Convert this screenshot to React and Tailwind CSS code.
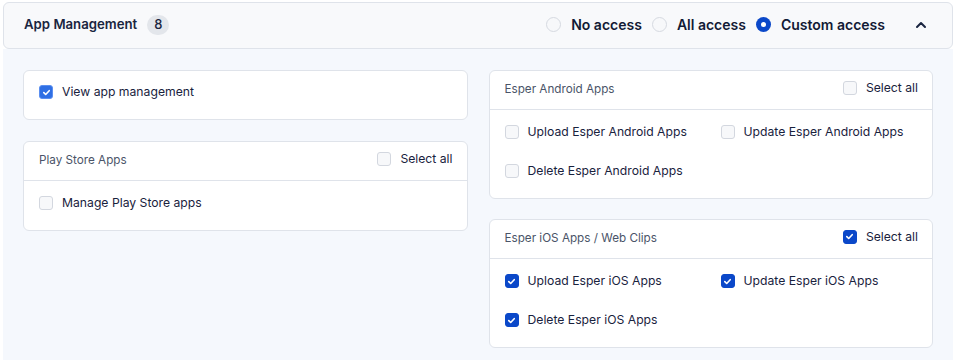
import React from "react";

const Check = ({ checked, variant = "dark" }) => {
  if (!checked)
    return (
      <span className="w-[14px] h-[14px] shrink-0 rounded-[3px] border border-[#d3d7df] bg-[#f7f8fa]" />
    );
  const bg = variant === "light" ? "bg-[#2f6fe4] border-[#5b8ff0]" : "bg-[#0b48c9] border-[#0b48c9]";
  return (
    <span className={`w-[14px] h-[14px] shrink-0 rounded-[3px] border flex items-center justify-center ${bg}`}>
      <svg width="9" height="9" viewBox="0 0 10 10" fill="none">
        <path d="M2 5.2 L4.1 7.2 L8 3" stroke="white" strokeWidth="1.8" strokeLinecap="round" strokeLinejoin="round" />
      </svg>
    </span>
  );
};

const Item = ({ label, checked, variant }) => (
  <div className="flex items-center gap-[9px] h-[20px]">
    <Check checked={checked} variant={variant} />
    <span className="text-[12.2px] text-[#19223d]">{label}</span>
  </div>
);

const Card = ({ title, allChecked, items, cols }) => (
  <div className="bg-white border border-[#dfe3ea] rounded-[6px]">
    <div className="h-[39px] border-b border-[#dfe3ea] flex items-center justify-between pl-[15px] pr-[14px]">
      <span className="text-[11.7px] text-[#4a5468]">{title}</span>
      <div className="flex items-center gap-[9px] -mt-[4px]">
        <Check checked={allChecked} />
        <span className="text-[12.2px] text-[#19223d]">Select all</span>
      </div>
    </div>
    <div className={`px-[15px] pt-[12px] pb-[17px] grid ${cols === 2 ? "grid-cols-[216px_1fr] gap-y-[19px]" : "grid-cols-1"}`}>
      {items.map((it) => (
        <Item key={it} label={it} checked={allChecked} />
      ))}
    </div>
  </div>
);

const Radio = ({ label, on }) => (
  <div className="flex items-center gap-[10px]">
    {on ? (
      <span className="w-[15px] h-[15px] rounded-full bg-[#0b48c9] flex items-center justify-center">
        <span className="w-[5px] h-[5px] rounded-full bg-white" />
      </span>
    ) : (
      <span className="w-[15px] h-[15px] rounded-full border border-[#d6dae1] bg-[#f7f8fa]" />
    )}
    <span className="text-[14px] font-semibold text-[#121a35]">{label}</span>
  </div>
);

export default function App() {
  return (
    <div className="w-[955px] h-[360px] bg-white pl-[3px] pr-[2px] pt-[2px] overflow-hidden" style={{ fontFamily: "Inter, 'Noto Sans', sans-serif" }}>
      <div className="h-[47px] bg-[#f8f9fb] border border-[#dfe3ea] rounded-[6px] flex items-center justify-between pl-[20px] pr-[24px]">
        <div className="flex items-center gap-[10px] -mt-[1px]">
          <span className="text-[13.2px] font-semibold text-[#1a2540]">App Management</span>
          <span className="h-[20px] min-w-[22px] px-[7px] rounded-full bg-[#e3e6eb] text-[13px] font-medium text-[#1a2540] flex items-center justify-center">8</span>
        </div>
        <div className="flex items-center -mt-[2px]">
          <div className="flex items-center gap-[10px]">
            <Radio label="No access" />
            <Radio label="All access" />
            <Radio label="Custom access" on />
          </div>
          <svg className="ml-[29px]" width="14" height="14" viewBox="0 0 14 14" fill="none">
            <path d="M3 9 L7 5 L11 9" stroke="#1a2540" strokeWidth="2" strokeLinecap="round" strokeLinejoin="round" />
          </svg>
        </div>
      </div>
      <div className="bg-[#f5f8fd] h-[400px] px-[20px] pt-[21px] grid grid-cols-2 gap-x-[21px] items-start">
        <div className="flex flex-col gap-[21px]">
          <div className="bg-white border border-[#dfe3ea] rounded-[6px] h-[50px] pl-[15px] pt-[11px]">
            <Item label="View app management" checked variant="light" />
          </div>
          <Card title="Play Store Apps" allChecked={false} items={["Manage Play Store apps"]} cols={1} />
        </div>
        <div className="flex flex-col gap-[20px]">
          <Card
            title="Esper Android Apps"
            allChecked={false}
            items={["Upload Esper Android Apps", "Update Esper Android Apps", "Delete Esper Android Apps"]}
            cols={2}
          />
          <Card
            title="Esper iOS Apps / Web Clips"
            allChecked
            items={["Upload Esper iOS Apps", "Update Esper iOS Apps", "Delete Esper iOS Apps"]}
            cols={2}
          />
        </div>
      </div>
    </div>
  );
}
